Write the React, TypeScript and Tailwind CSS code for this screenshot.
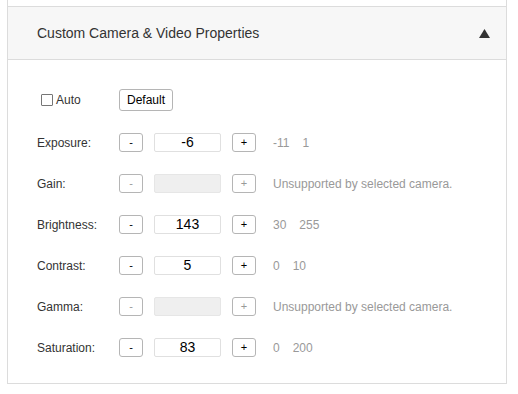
const font = { fontFamily: '"Liberation Sans", Arial, sans-serif' };

type Row = {
  label: string;
  value?: string;
  range?: [string, string];
};

const rows: Row[] = [
  { label: 'Exposure:', value: '-6', range: ['-11', '1'] },
  { label: 'Gain:' },
  { label: 'Brightness:', value: '143', range: ['30', '255'] },
  { label: 'Contrast:', value: '5', range: ['0', '10'] },
  { label: 'Gamma:' },
  { label: 'Saturation:', value: '83', range: ['0', '200'] },
];

function StepButton({ children, disabled }: { children: string; disabled?: boolean }) {
  return (
    <button
      className={
        'w-[24px] h-[19px] flex items-center justify-center rounded-[3px] border border-[#b5b5b5] bg-white text-[11px] leading-none ' +
        (disabled ? 'text-[#999]' : 'text-black')
      }
    >
      {children}
    </button>
  );
}

export default function App() {
  return (
    <div className="w-[518px] h-[394px] bg-white" style={font}>
      <div className="ml-[7px] w-[500px] h-[6px] border-x border-[#dcdcdc]" />
      <div className="ml-[7px] w-[500px] border border-[#dcdcdc]">
        <div className="h-[53px] bg-[#f7f7f7] border-b border-[#dcdcdc] flex items-center justify-between pl-[29px] pr-[16px]">
          <span className="text-[14px] text-[#333]">Custom Camera &amp; Video Properties</span>
          <svg width="11" height="9" viewBox="0 0 11 9" className="mt-[1px]">
            <path d="M5.5 0 L11 9 L0 9 Z" fill="#333" />
          </svg>
        </div>
        <div className="pt-[19px] pb-[15px] pl-[29px]">
          <div className="h-[41px] mb-[2px] flex items-center">
            <div className="w-[82px] flex items-center">
              <span className="ml-[4px] w-[12px] h-[12px] border border-[#767676] rounded-[1px] bg-white" />
              <span className="ml-[3px] text-[12px] text-[#333]">Auto</span>
            </div>
            <button className="h-[22px] w-[54px] rounded-[3px] border border-[#b5b5b5] bg-white text-[12px] text-black">
              Default
            </button>
          </div>
          {rows.map((r) => (
            <div key={r.label} className="h-[41px] flex items-center">
              <span className="w-[82px] text-[12px] text-[#333]">{r.label}</span>
              <StepButton disabled={!r.value}>-</StepButton>
              <div
                className={
                  'ml-[11px] w-[67px] h-[19px] rounded-[2px] border flex items-center justify-center text-[14px] text-black ' +
                  (r.value ? 'border-[#e0e0e0] bg-white' : 'border-[#e6e6e6] bg-[#efefef]')
                }
              >
                {r.value}
              </div>
              <div className="ml-[11px]">
                <StepButton disabled={!r.value}>+</StepButton>
              </div>
              <span className="ml-[17px] text-[12px] text-[#999] flex gap-[13px]">
                {r.range ? (
                  <>
                    <span>{r.range[0]}</span>
                    <span>{r.range[1]}</span>
                  </>
                ) : (
                  <span>Unsupported by selected camera.</span>
                )}
              </span>
            </div>
          ))}
        </div>
      </div>
    </div>
  );
}
